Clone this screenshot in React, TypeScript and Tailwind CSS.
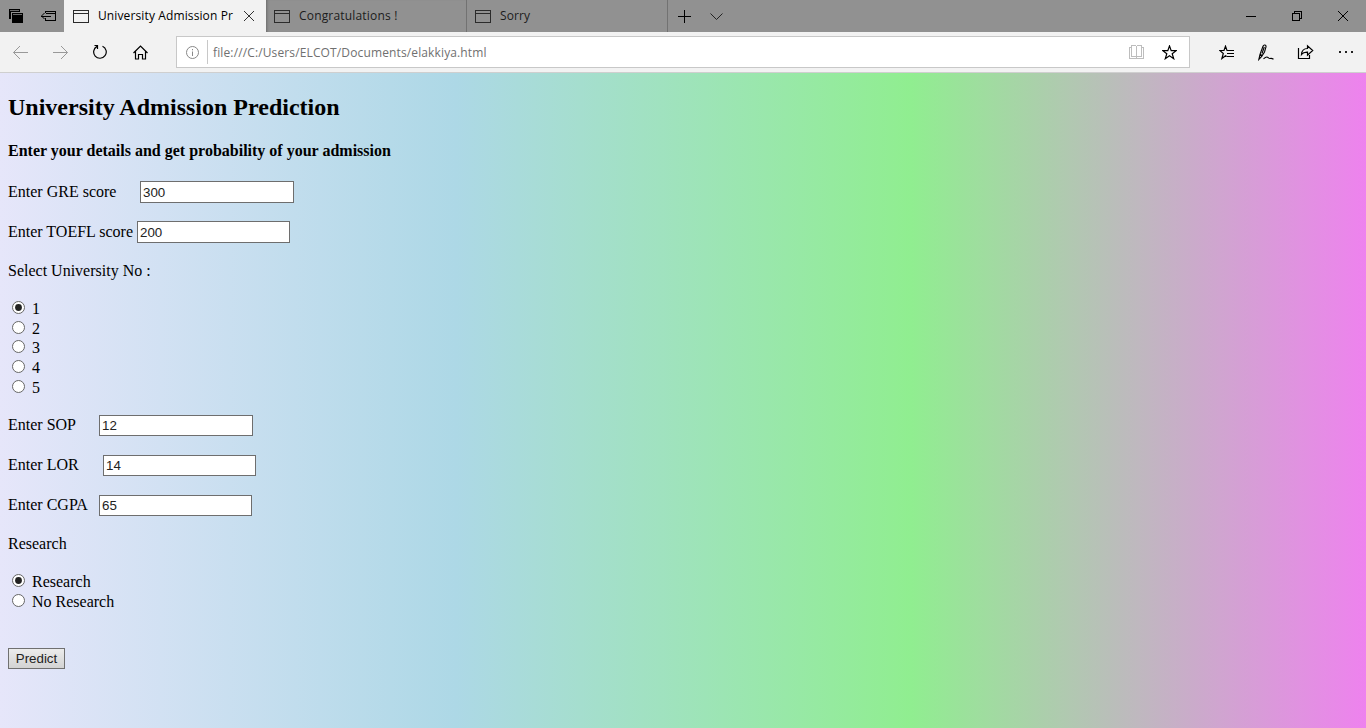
import { useState } from "react";
import type { ReactNode } from "react";

function Glyph({ children, className = "", w = 16, h = 16, crisp = false }: { children: ReactNode; className?: string; w?: number; h?: number; crisp?: boolean }) {
  return (
    <svg
      className={`block shrink-0 ${className}`}
      width={w}
      height={h}
      viewBox={`0 0 ${w} ${h}`}
      fill="none"
      stroke="currentColor"
      strokeWidth="1"
      shapeRendering={crisp ? "crispEdges" : "auto"}
    >
      {children}
    </svg>
  );
}

const WindowGlyph = () => (
  <Glyph h={13} crisp className="text-[#2b2b2b]">
    <path d="M.5.5h15v12H.5zM.5 3.500h15" />
  </Glyph>
);

function TabBar() {
  return (
    <div className="flex h-8 bg-[#919191] text-[12px] tracking-[0.12px] text-[#1c1c1c]">
      <div className="flex w-16 pt-[9px] pl-[9px] text-black">
        <Glyph w={14} h={14} crisp>
          <path d="M0 0h11v3H2v7H0zM3 4h11v10H3z" fill="currentColor" stroke="none" />
          <path d="M1 1.500h9M4 5.500h9" stroke="#6b6b6b" />
        </Glyph>
        <Glyph w={17} h={13} className="ml-[17px]" crisp>
          <path d="M5.500 4V2.500h10v9h-10V9M6 4.500h9" />
          <path d="M1 7h10" />
          <path d="M4.500 4L1.500 7l3 3" shapeRendering="auto" />
        </Glyph>
      </div>
      <div className="flex w-[202px] items-center bg-[#f2f2f2] pl-[9px] text-black">
        <WindowGlyph />
        <span className="ml-[9px] w-[146px] whitespace-nowrap">University Admission Pr</span>
        <Glyph w={10} h={10} className="text-[#333]">
          <path d="M0 0l10 10M10 0L0 10" />
        </Glyph>
      </div>
      <div className="flex w-[201px] items-center border-r border-[#727272] pl-2 shadow-[inset_3px_0_3px_-2px_#6a6a6a]">
        <WindowGlyph />
        <span className="ml-[9px] tracking-[0.18px]">Congratulations !</span>
      </div>
      <div className="flex w-[201px] items-center border-r border-[#727272] pl-2">
        <WindowGlyph />
        <span className="ml-[9px]">Sorry</span>
      </div>
      <div className="flex flex-1 items-center pl-[10px] text-black">
        <Glyph w={13} h={13} crisp>
          <path d="M6.500 0v13M0 6.500h13" />
        </Glyph>
        <Glyph w={13} h={7} className="ml-[19px] text-[#222]">
          <path d="M.5.5l6 6 6-6" />
        </Glyph>
      </div>
      <div className="flex items-center pr-[18px] text-black">
        <Glyph w={10} h={10} crisp>
          <path d="M0 5.500h10" />
        </Glyph>
        <Glyph w={10} h={10} crisp className="ml-9">
          <path d="M.5 2.500h7v7h-7zM2.500 2V.5h7v7H8" />
        </Glyph>
        <Glyph w={10} h={10} className="ml-9">
          <path d="M0 0l10 10M10 0L0 10" />
        </Glyph>
      </div>
    </div>
  );
}

function Toolbar() {
  return (
    <div className="flex h-[41px] items-center border-b border-[#cfcfcf] bg-[#f2f2f2] text-black">
      <Glyph className="ml-[13px] text-[#999]" h={15}>
        <path d="M.5 7.500H15M7 1L.5 7.500 7 14" />
      </Glyph>
      <Glyph className="ml-6 text-[#999]" h={15}>
        <path d="M0 7.500h14.500M8 1l6.500 6.500L8 14" />
      </Glyph>
      <Glyph className="ml-6" w={14} h={16}>
        <path d="M9.500 2.200A6.300 6.300 0 1 1 4 2.400M1.500 1.500h3V5" strokeWidth="1.200" />
      </Glyph>
      <Glyph className="ml-[26px]" w={15} h={15}>
        <path d="M.5 8L7.500 1l7 7M2.500 6.500v7.500h3V9.500h4V14h3V6.500" strokeWidth="1.200" />
      </Glyph>
      <div className="ml-[28px] flex h-8 w-[1014px] items-center border border-[#c8c8c8] bg-white">
        <Glyph className="ml-[9px] text-[#888]" w={13} h={13}>
          <circle cx="6.500" cy="6.500" r="6" />
          <path d="M6.500 5.500V10M6.500 3v1.300" />
        </Glyph>
        <div className="ml-2 h-6 w-px bg-[#c8c8c8]" />
        <span className="ml-[5px] flex-1 pt-px text-[12px] tracking-[0.13px] text-[#707070]">file:///C:/Users/ELCOT/Documents/elakkiya.html</span>
        <Glyph w={15} h={14} crisp className="text-[#bdbdbd]">
          <path d="M2.500.5h4l1 1 1-1h4v11h-4l-1 1-1-1h-4zM7.500 1v12M2 2.500H.5v11h14v-11H13" />
        </Glyph>
        <Glyph className="mr-[12px] ml-[18px]" w={15} h={15}>
          <path d="M7.500.9l1.700 4.700 5 .1-4 3.100 1.500 4.900-4.200-2.900-4.200 2.900 1.500-4.900-4-3.100 5-.1z" strokeWidth="1.200" />
        </Glyph>
      </div>
      <Glyph className="ml-[29px]" w={16} h={15}>
        <path d="M8.500 5.500H8L6.500 1.200 5 5.500H.8l3.500 3-1.400 5 3.600-2.800 1.200.9M7.500 5.500H15M8 8.500h7M8 11.500h7" strokeWidth="1.200" />
      </Glyph>
      <Glyph className="ml-[23px]" w={17} h={17}>
        <path d="M.8 15.500L2 10.300 5 2.200C5.700.4 8.300.8 8 2.800L6.500 8l-2.800 4.500zM2 10.300l2.300 1.200M6.300 3L4 9.500M5.500 14.800c1.500-1.300 3-2 4-1.600 1.100.5 1.400 1.500 2.600 1.300 1.200-.4 1.900-.3 3.400.8" strokeWidth="1.100" />
      </Glyph>
      <Glyph className="ml-[22px]" w={17} h={16}>
        <path d="M1.500 4v10.500h11V11M4.500 10.500c.3-4 2.200-6 6-6V1.800L15.700 6.500l-5.200 4.600V8.200c-2.800-.1-4.700.5-6 2.300z" strokeWidth="1.200" />
      </Glyph>
      <Glyph className="ml-[25px] text-[#222]" w={15} h={4} crisp>
        <path d="M0 1h2v2H0zM6 1h2v2H6zM12 1h2v2h-2z" fill="currentColor" stroke="none" />
      </Glyph>
    </div>
  );
}

function Field({ label, value, row, labelWidth, box }: { label: string; value: string; row: string; labelWidth: string; box: string }) {
  return (
    <label className={`flex h-5 items-start ${row}`}>
      <span className={`shrink-0 whitespace-nowrap ${labelWidth}`}>{label}</span>
      <input
        type="text"
        defaultValue={value}
        className={`shrink-0 rounded-none border border-[#6e6e6e] bg-white pl-[2px] font-['Liberation_Sans',sans-serif] text-[13.333px] text-[#222] outline-none ${box}`}
      />
    </label>
  );
}

function RadioOption({ label, checked, onSelect, row = "" }: { label: string; checked: boolean; onSelect: () => void; row?: string }) {
  return (
    <label className={`flex h-5 items-start pl-1 ${row}`}>
      <input type="radio" checked={checked} onChange={onSelect} className="sr-only" />
      <Glyph w={13} h={13} className="mt-[2px] text-[#666]">
        <circle cx="6.500" cy="6.500" r="6" fill="white" />
        {checked && <circle cx="6.500" cy="6.500" r="3.400" fill="#222" stroke="none" />}
      </Glyph>
      <span className="ml-[7px]">{label}</span>
    </label>
  );
}

const universities = [
  { label: "1", row: "mt-[18px]" },
  { label: "2", row: "" },
  { label: "3", row: "-mt-px" },
  { label: "4", row: "" },
  { label: "5", row: "" },
];

export default function App() {
  const [university, setUniversity] = useState("1");
  const [research, setResearch] = useState("Research");

  return (
    <div className="flex h-[728px] w-[1366px] flex-col overflow-hidden font-['Open_Sans','Noto_Sans',sans-serif]">
      <TabBar />
      <Toolbar />
      <main className="relative flex-1 bg-[linear-gradient(to_right,#e6e6fa,#add8e6,#90ee90,#ee82ee)] px-2 font-['Liberation_Serif',serif] text-[16px] leading-5 text-black">
        <h2 className="mt-5 text-[24px] leading-7 font-bold">University Admission Prediction</h2>
        <h4 className="mt-5 font-bold">Enter your details and get probability of your admission</h4>
        <Field label="Enter GRE score" value="300" row="mt-[21px]" labelWidth="w-[132px]" box="-mt-px h-[22px] w-[154px]" />
        <Field label="Enter TOEFL score" value="200" row="mt-5" labelWidth="w-[129px]" box="-mt-px h-[22px] w-[153px]" />
        <p className="mt-[19px]">Select University No :</p>
        {universities.map((u) => (
          <RadioOption key={u.label} label={u.label} row={u.row} checked={university === u.label} onSelect={() => setUniversity(u.label)} />
        ))}
        <Field label="Enter SOP" value="12" row="mt-[17px]" labelWidth="w-[91px]" box="h-[21px] w-[154px]" />
        <Field label="Enter LOR" value="14" row="mt-5" labelWidth="w-[95px]" box="h-[21px] w-[153px]" />
        <Field label="Enter CGPA" value="65" row="mt-5" labelWidth="w-[91px]" box="h-[21px] w-[153px]" />
        <p className="mt-[19px]">Research</p>
        <RadioOption label="Research" row="mt-[18px]" checked={research === "Research"} onSelect={() => setResearch("Research")} />
        <RadioOption label="No Research" checked={research === "No Research"} onSelect={() => setResearch("No Research")} />
        <button className="mt-9 block h-[21px] w-[57px] border border-[#707070] bg-linear-to-b from-[#ececec] to-[#d3d3d3] font-['Liberation_Sans',sans-serif] text-[13.333px] leading-[19px] text-[#222]">
          Predict
        </button>
      </main>
    </div>
  );
}
